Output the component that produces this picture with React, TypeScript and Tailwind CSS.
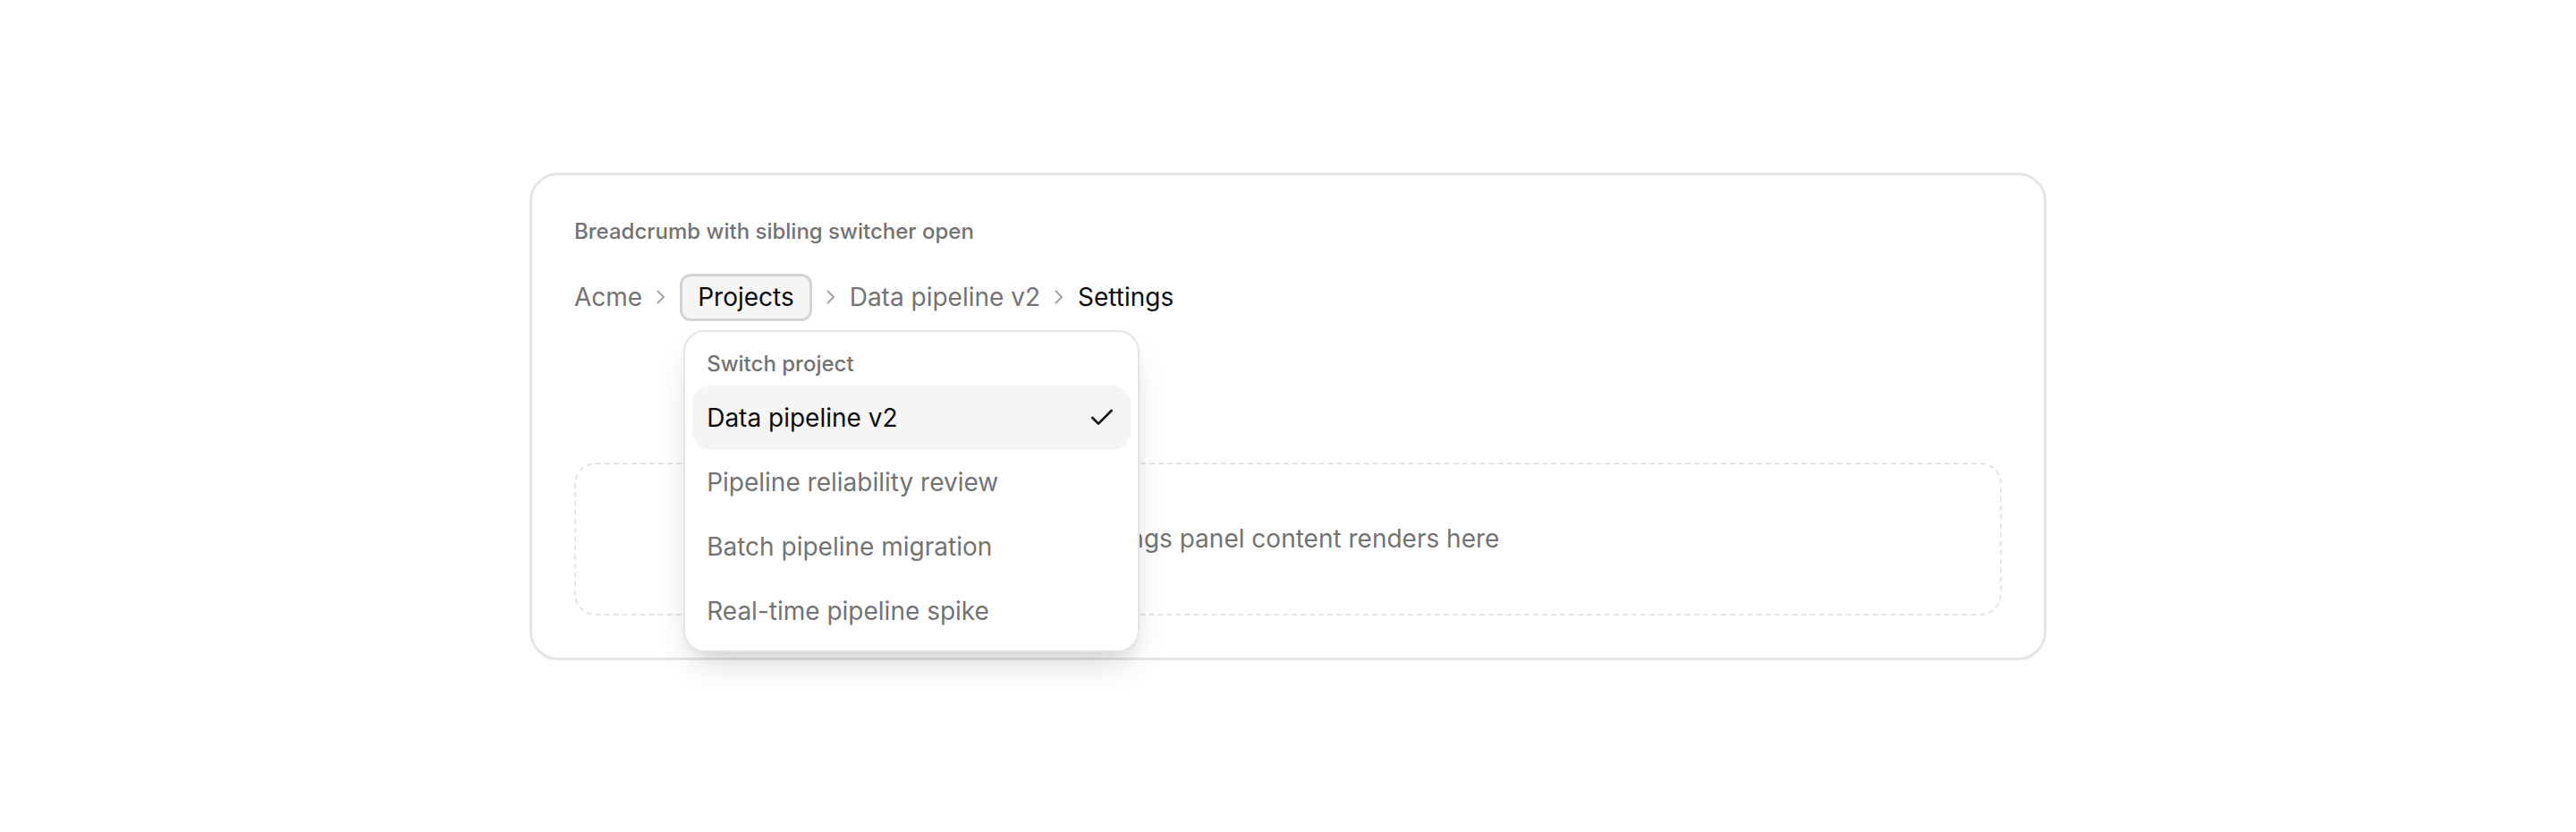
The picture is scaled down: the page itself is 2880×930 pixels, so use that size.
import { Check } from 'lucide-react'

const projects = [
  'Data pipeline v2',
  'Pipeline reliability review',
  'Batch pipeline migration',
  'Real-time pipeline spike',
]

function Separator() {
  return (
    <svg width="16" height="28" viewBox="0 0 16 28" fill="none" className="shrink-0">
      <polyline
        points="4.5,7.5 11,14 4.5,20.5"
        stroke="#a3a3a3"
        strokeWidth="2"
        strokeLinecap="round"
        strokeLinejoin="round"
      />
    </svg>
  )
}

function ProjectSwitcher({ current }: { current: string }) {
  return (
    <div className="absolute left-[4px] top-[63px] z-10 w-[510px] rounded-[24px] border-2 border-neutral-200 bg-white p-2 shadow-[0_20px_40px_-10px_rgba(0,0,0,0.16),0_8px_16px_-8px_rgba(0,0,0,0.1)]">
      <div className="px-4 pt-3 pb-2 text-[24px] leading-[32px] font-medium text-neutral-500">
        Switch project
      </div>
      {projects.map((name) => {
        const active = name === current
        return (
          <div
            key={name}
            className={
              active
                ? 'flex h-[72px] items-center justify-between rounded-[20px] bg-neutral-100 px-4 text-neutral-950'
                : 'flex h-[72px] items-center justify-between rounded-[20px] px-4 text-neutral-500'
            }
          >
            <span className="text-[28px] leading-[40px]">{name}</span>
            {active && <Check size={32} strokeWidth={2} className="text-neutral-900" />}
          </div>
        )
      })}
    </div>
  )
}

export default function App() {
  const current = 'Data pipeline v2'

  return (
    <div
      className="flex min-h-screen items-center justify-center bg-white"
      style={{ fontFamily: 'Inter, "Noto Sans", sans-serif' }}
    >
      <div className="w-[1696px] rounded-[32px] border-[3px] border-neutral-200 bg-white p-[47px]">
        <p className="mb-[31px] text-[24px] leading-[32px] font-medium text-neutral-500">
          Breadcrumb with sibling switcher open
        </p>

        <nav className="flex items-center gap-[13px] text-[28px] leading-[40px]">
          <span className="text-neutral-500">Acme</span>
          <Separator />
          <div className="relative">
            <button className="h-[53px] rounded-[12px] border-[3px] border-[#d4d4d4] bg-neutral-100 px-[17px] text-neutral-950">
              Projects
            </button>
            <ProjectSwitcher current={current} />
          </div>
          <Separator />
          <span className="text-neutral-500">{current}</span>
          <Separator />
          <span className="text-neutral-950">Settings</span>
        </nav>

        <div className="mt-[158px] flex h-[171px] items-center justify-center rounded-[24px] border-2 border-dashed border-neutral-200 text-[28px] leading-[40px] text-neutral-500">
          Settings panel content renders here
        </div>
      </div>
    </div>
  )
}
